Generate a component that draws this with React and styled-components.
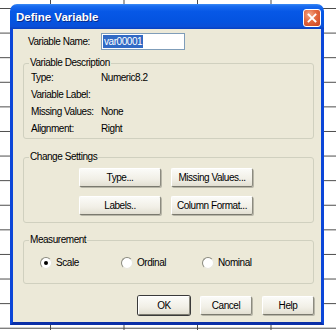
import React from 'react';
import styled, { createGlobalStyle } from 'styled-components';

const GlobalStyle = createGlobalStyle`
  html, body {
    margin: 0;
    padding: 0;
    background-color: #ffffff;
    background-image:
      linear-gradient(to right, #4a4a4a 1px, transparent 1px),
      linear-gradient(to bottom, #4a4a4a 1px, transparent 1px);
    background-size: 73.5px 100%, 100% 24.6px;
    background-position: 50px 0, 0 8px;
    height: 330px;
    overflow: hidden;
  }
  #root {
    padding: 4px 0 0 10px;
  }
`;

const uiFont = `"Liberation Sans", Arial, sans-serif`;

const Window = styled.div`
  width: 314px;
  display: flex;
  flex-direction: column;
  font-family: ${uiFont};
  font-size: 10px;
  letter-spacing: -0.45px;
  white-space: nowrap;
  color: #000;
`;

const TitleBar = styled.div`
  height: 25px;
  display: flex;
  align-items: center;
  justify-content: space-between;
  padding: 0 3px 0 6px;
  border-radius: 7px 7px 0 0;
  background: linear-gradient(
    to bottom,
    #3c8cf5 0%,
    #1a6cf0 8%,
    #0758e6 30%,
    #0453e0 70%,
    #0a4fd8 90%,
    #0840c0 100%
  );
`;

const Title = styled.span`
  font-weight: bold;
  font-size: 11.5px;
  letter-spacing: 0;
  color: #fff;
  text-shadow: 1px 1px 0 #0a2a8a;
`;

const CloseButton = styled.div`
  width: 16px;
  height: 16px;
  border: 1px solid #fff;
  border-radius: 3px;
  background: radial-gradient(circle at 35% 30%, #f4a887 0%, #e3683e 45%, #c8401f 100%);
  display: flex;
  align-items: center;
  justify-content: center;
  margin-top: 3px;
`;

const Client = styled.div`
  background: #ece9d8;
  border: 3px solid #0b46d8;
  border-top: none;
  border-bottom-color: #0a2fa8;
  padding: 4px 7px 7px 10px;
  display: flex;
  flex-direction: column;
`;

const NameRow = styled.div`
  display: flex;
  align-items: center;
  height: 17px;
  padding-left: 5px;
`;

const NameLabel = styled.span`
  width: 73px;
`;

const TextBox = styled.div`
  width: 81px;
  height: 15px;
  background: #fff;
  border: 1px solid #7f9db9;
  display: flex;
  align-items: center;
  padding-left: 1px;
`;

const Selection = styled.span`
  background: #316ac5;
  color: #fff;
  line-height: 13px;
  padding: 0 1px;
`;

const Group = styled.fieldset`
  margin: ${p => p.$top}px 0 0 0;
  padding: 0;
  border: 1px solid #d0d0bf;
  border-radius: 3px;
  min-width: 0;
`;

const Legend = styled.legend`
  padding: 0 1px;
  margin-left: 5px;
  line-height: 12px;
`;

const GroupBody = styled.div`
  padding: ${p => p.$pad};
`;

const InfoRow = styled.div`
  display: flex;
  height: 17px;
  align-items: center;
`;

const InfoLabel = styled.span`
  width: 70px;
`;

const ButtonGrid = styled.div`
  display: grid;
  grid-template-columns: 82px 82px;
  gap: 9px 10px;
`;

const Button = styled.div`
  width: ${p => p.$w}px;
  height: 19px;
  box-sizing: border-box;
  display: flex;
  align-items: center;
  justify-content: center;
  border: 1px solid;
  border-color: #ffffff #8c8b80 #7a796e #ffffff;
  border-radius: 2px;
  background: linear-gradient(to bottom, #fbfbf8 0%, #f1efe6 60%, #e2dfd2 100%);
  box-shadow: ${p => (p.$default ? '0 0 0 1px #3a3a3a' : '1px 1px 0 #b8b6a8')};
`;

const RadioRow = styled.div`
  display: grid;
  grid-template-columns: 81px 81px 81px;
`;

const RadioItem = styled.div`
  display: flex;
  align-items: center;
  gap: 4px;
  height: 13px;
`;

const RadioCircle = styled.span`
  width: 10px;
  height: 10px;
  border-radius: 50%;
  background: #fff;
  border: 1px solid;
  border-color: #8a8a7e #e8e6dc #e8e6dc #8a8a7e;
  display: flex;
  align-items: center;
  justify-content: center;
  &::after {
    content: '';
    width: 4px;
    height: 4px;
    border-radius: 50%;
    background: ${p => (p.$checked ? '#000' : 'transparent')};
  }
`;

const Footer = styled.div`
  display: flex;
  justify-content: flex-end;
  gap: 10px;
  margin-top: 12px;
`;

const description = [
  ['Type:', 'Numeric8.2'],
  ['Variable Label:', ''],
  ['Missing Values:', 'None'],
  ['Alignment:', 'Right'],
];

const measures = [
  { label: 'Scale', checked: true },
  { label: 'Ordinal', checked: false },
  { label: 'Nominal', checked: false },
];

const App = () => {
  return (
    <>
      <GlobalStyle />
      <Window>
        <TitleBar>
          <Title>Define Variable</Title>
          <CloseButton>
            <svg width="10" height="10" viewBox="0 0 10 10">
              <path d="M1.5 1.5 L8.5 8.5 M8.5 1.5 L1.5 8.5" stroke="#fff" strokeWidth="1.8" strokeLinecap="square" />
            </svg>
          </CloseButton>
        </TitleBar>
        <Client>
          <NameRow>
            <NameLabel>Variable Name:</NameLabel>
            <TextBox>
              <Selection>var00001</Selection>
            </TextBox>
          </NameRow>

          <Group $top={7}>
            <Legend>Variable Description</Legend>
            <GroupBody $pad="0 0 1px 7px">
              {description.map(([label, value]) => (
                <InfoRow key={label}>
                  <InfoLabel>{label}</InfoLabel>
                  <span>{value}</span>
                </InfoRow>
              ))}
            </GroupBody>
          </Group>

          <Group $top={12}>
            <Legend>Change Settings</Legend>
            <GroupBody $pad="5px 0 7px 55px">
              <ButtonGrid>
                <Button $w={82}>Type...</Button>
                <Button $w={82}>Missing Values...</Button>
                <Button $w={82}>Labels..</Button>
                <Button $w={82}>Column Format...</Button>
              </ButtonGrid>
            </GroupBody>
          </Group>

          <Group $top={11}>
            <Legend>Measurement</Legend>
            <GroupBody $pad="10px 0 14px 16px">
              <RadioRow>
                {measures.map(m => (
                  <RadioItem key={m.label}>
                    <RadioCircle $checked={m.checked} />
                    <span>{m.label}</span>
                  </RadioItem>
                ))}
              </RadioRow>
            </GroupBody>
          </Group>

          <Footer>
            <Button $w={52} $default>OK</Button>
            <Button $w={52}>Cancel</Button>
            <Button $w={52}>Help</Button>
          </Footer>
        </Client>
      </Window>
    </>
  );
};

export default App;
